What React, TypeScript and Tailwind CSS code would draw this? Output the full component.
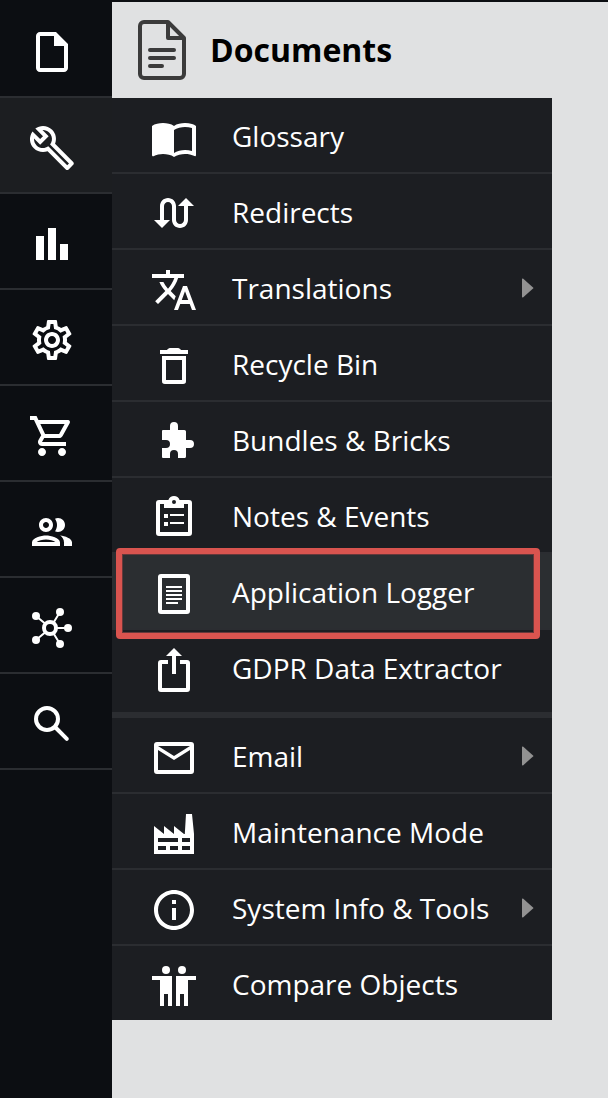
import type { ReactNode } from "react";

function Icon({ children }: { children: ReactNode }) {
  return (
    <svg viewBox="0 0 24 24" className="size-12 shrink-0 fill-white" fillRule="evenodd" aria-hidden="true">
      {children}
    </svg>
  );
}

const FileIcon = () => (
  <Icon>
    <path d="M14 2H6c-1.1 0-2 .9-2 2v16c0 1.1.9 2 2 2h12c1.1 0 2-.9 2-2V8zM6 20V4h7v5h5v11z" />
  </Icon>
);

const WrenchIcon = () => (
  <Icon>
    <path d="M22.61 18.99l-9.08-9.08c.93-2.34.45-5.1-1.44-7C9.79.61 6.21.4 3.66 2.26L7.5 6.11 6.08 7.52 2.25 3.69C.39 6.23.6 9.82 2.9 12.11c1.86 1.86 4.57 2.35 6.89 1.48l9.11 9.11c.39.39 1.02.39 1.41 0l2.3-2.3c.4-.38.4-1.01 0-1.41zm-3 1.6l-9.46-9.46c-.61.45-1.29.72-2 .82-1.36.2-2.79-.21-3.83-1.25C3.37 9.76 2.93 8.5 3 7.26l3.09 3.09 4.24-4.24-3.09-3.09c1.24-.07 2.49.37 3.44 1.31 1.08 1.08 1.49 2.57 1.24 3.96-.12.71-.42 1.37-.88 1.96l9.45 9.45-.88.89z" />
  </Icon>
);

const BarsIcon = () => (
  <Icon>
    <path d="M4 8h4v12H4zM10 4h4v16h-4zM16 12h4v8h-4z" />
  </Icon>
);

const GearIcon = () => (
  <Icon>
    <path d="M19.43 12.98c.04-.32.07-.64.07-.98 0-.34-.03-.66-.07-.98l2.11-1.65c.19-.15.24-.42.12-.64l-2-3.46c-.09-.16-.26-.25-.44-.25-.06 0-.12.01-.17.03l-2.49 1c-.52-.4-1.08-.73-1.69-.98l-.38-2.65C14.46 2.18 14.25 2 14 2h-4c-.25 0-.46.18-.49.42l-.38 2.65c-.61.25-1.17.59-1.69.98l-2.49-1c-.06-.02-.12-.03-.18-.03-.17 0-.34.09-.43.25l-2 3.46c-.13.22-.07.49.12.64l2.11 1.65c-.04.32-.07.65-.07.98 0 .33.03.66.07.98l-2.11 1.65c-.19.15-.24.42-.12.64l2 3.46c.09.16.26.25.44.25.06 0 .12-.01.17-.03l2.49-1c.52.4 1.08.73 1.69.98l.38 2.65c.03.24.24.42.49.42h4c.25 0 .46-.18.49-.42l.38-2.65c.61-.25 1.17-.59 1.69-.98l2.49 1c.06.02.12.03.18.03.17 0 .34-.09.43-.25l2-3.46c.12-.22.07-.49-.12-.64l-2.11-1.65zm-1.98-1.71c.04.31.05.52.05.73 0 .21-.02.43-.05.73l-.14 1.13.89.7 1.08.84-.7 1.21-1.27-.51-1.04-.42-.9.68c-.43.32-.84.56-1.25.73l-1.06.43-.16 1.13-.2 1.35h-1.4l-.19-1.35-.16-1.13-1.06-.43c-.43-.18-.83-.41-1.23-.71l-.91-.7-1.06.43-1.27.51-.7-1.21 1.08-.84.89-.7-.14-1.13c-.03-.31-.05-.54-.05-.74s.02-.43.05-.73l.14-1.13-.89-.7-1.08-.84.7-1.21 1.27.51 1.04.42.9-.68c.43-.32.84-.56 1.25-.73l1.06-.43.16-1.13.2-1.35h1.39l.19 1.35.16 1.13 1.06.43c.43.18.83.41 1.23.71l.91.7 1.06-.43 1.27-.51.7 1.21-1.07.85-.89.7.14 1.13zM12 8c-2.21 0-4 1.79-4 4s1.79 4 4 4 4-1.79 4-4-1.79-4-4-4zm0 6c-1.1 0-2-.9-2-2s.9-2 2-2 2 .9 2 2-.9 2-2 2z" />
  </Icon>
);

const CartIcon = () => (
  <Icon>
    <path d="M15.55 13c.75 0 1.41-.41 1.75-1.03l3.58-6.49c.37-.66-.11-1.48-.87-1.48H5.21l-.94-2H1v2h2l3.6 7.59-1.35 2.44C4.52 15.37 5.48 17 7 17h12v-2H7l1.1-2h7.45zM6.16 6h12.15l-2.76 5H8.53L6.16 6zM7 18c-1.1 0-1.99.9-1.99 2S5.9 22 7 22s2-.9 2-2-.9-2-2-2zm10 0c-1.1 0-1.99.9-1.99 2s.89 2 1.99 2 2-.9 2-2-.9-2-2-2z" />
  </Icon>
);

const PeopleIcon = () => (
  <Icon>
    <path d="M9 13.75c-2.34 0-7 1.17-7 3.5V19h14v-1.75c0-2.33-4.66-3.5-7-3.5zM4.34 17c.84-.58 2.87-1.25 4.66-1.25s3.82.67 4.66 1.25H4.34zM9 12c1.93 0 3.5-1.57 3.5-3.5S10.93 5 9 5 5.5 6.57 5.5 8.5 7.07 12 9 12zm0-5c.83 0 1.5.67 1.5 1.5S9.83 10 9 10s-1.5-.67-1.5-1.5S8.17 7 9 7zm7.04 6.81c1.16.84 1.96 1.96 1.96 3.44V19h4v-1.75c0-2.02-3.5-3.17-5.96-3.44zM15 12c1.93 0 3.5-1.57 3.5-3.5S16.93 5 15 5c-.54 0-1.04.13-1.5.35.63.89 1 1.98 1 3.15s-.37 2.26-1 3.15c.46.22.96.35 1.5.35z" />
  </Icon>
);

const HubIcon = () => (
  <Icon>
    <path d="M4 6l4.8 4M16 4l-3.2 5.2M14 12h6M12.8 14.8L16 20M4 18l4.8-4" fill="none" stroke="white" />
    <circle cx="11" cy="12" r="3" fill="none" stroke="white" strokeWidth="2" />
    <circle cx="4" cy="6" r="2" />
    <circle cx="16" cy="4" r="2" />
    <circle cx="20" cy="12" r="2" />
    <circle cx="16" cy="20" r="2" />
    <circle cx="4" cy="18" r="2" />
  </Icon>
);

const SearchIcon = () => (
  <Icon>
    <circle cx="9.5" cy="9.5" r="5.5" fill="none" stroke="white" strokeWidth="2" />
    <path d="M14 14l5.4 5.4" fill="none" stroke="white" strokeWidth="2" strokeLinecap="round" />
  </Icon>
);

const BookIcon = () => (
  <Icon>
    <path d="M21 5c-1.11-.35-2.33-.5-3.5-.5-1.95 0-4.05.4-5.5 1.5-1.45-1.1-3.55-1.5-5.5-1.5S2.45 4.9 1 6v14.65c0 .25.25.5.5.5.1 0 .15-.05.25-.05C3.1 20.45 5.05 20 6.5 20c1.95 0 4.05.4 5.5 1.5 1.35-.85 3.8-1.5 5.5-1.5 1.65 0 3.35.3 4.75 1.05.1.05.15.05.25.05.25 0 .5-.25.5-.5V6c-.6-.45-1.25-.75-2-1zm0 13.5c-1.1-.35-2.3-.5-3.5-.5-1.7 0-4.15.65-5.5 1.5V8c1.35-.85 3.8-1.5 5.5-1.5 1.2 0 2.4.15 3.5.5v11.5z" />
  </Icon>
);

const RedirectIcon = () => (
  <Icon>
    <path d="M18 4l-4 4h3v7c0 1.1-.9 2-2 2s-2-.9-2-2V8c0-2.21-1.79-4-4-4S5 5.79 5 8v7H2l4 4 4-4H7V8c0-1.1.9-2 2-2s2 .9 2 2v7c0 2.21 1.79 4 4 4s4-1.79 4-4V8h3l-4-4z" />
  </Icon>
);

const TranslateIcon = () => (
  <Icon>
    <path d="M12.87 15.07l-2.54-2.51.03-.03c1.74-1.94 2.98-4.17 3.71-6.53H17V4h-7V2H8v2H1v1.99h11.17C11.5 7.92 10.44 9.75 9 11.35 8.07 10.32 7.3 9.19 6.69 8h-2c.73 1.63 1.73 3.17 2.98 4.56l-5.09 5.02L4 19l5-5 3.11 3.11.76-2.04zM18.5 10h-2L12 22h2l1.12-3h4.75L21 22h2l-4.5-12zm-2.62 7l1.62-4.33L19.12 17h-3.24z" />
  </Icon>
);

const BinIcon = () => (
  <Icon>
    <path d="M6 19.5C6 20.6 6.4 21 7.5 21h9c1.1 0 1.5-.4 1.5-1.5V7H6zM8 9h8v10H8zM15.5 4c-.6-.7-1-1-2-1h-3c-1 0-1.4.3-2 1H5v2h14V4z" />
  </Icon>
);

const PuzzleIcon = () => (
  <Icon>
    <path d="M6 6.5a.5.5 0 0 1 .5-.5H10V4a2 2 0 0 1 4 0v2h3.200a.8.8 0 0 1 .8.8V11h2a2 2 0 0 1 0 4h-2v4.200a.8.8 0 0 1-.8.8H14v-2a2 2 0 0 0-4 0v2H6.500a.5.5 0 0 1-.5-.5V15h2a2 2 0 0 0 0-4H6z" />
  </Icon>
);

const ClipboardIcon = () => (
  <Icon>
    <path d="M19.5 3H14.8C14.4 1.8 13.3 1 12 1S9.6 1.8 9.2 3H4.5A1.5 1.5 0 0 0 3 4.5v15A1.5 1.5 0 0 0 4.5 21h15a1.5 1.5 0 0 0 1.5-1.5v-15A1.5 1.5 0 0 0 19.5 3zM12 3a1 1 0 1 1 0 2 1 1 0 0 1 0-2zM7 7h10V5h2v14H5V5h2z" />
    <path d="M7 10h2v2H7zM10 10h7v1h-7zM7 14h2v2H7zM10 14h7v1h-7z" />
  </Icon>
);

const LogIcon = () => (
  <Icon>
    <path d="M5.5 2h13A1.5 1.5 0 0 1 20 3.5v17a1.5 1.5 0 0 1-1.5 1.5h-13A1.5 1.5 0 0 1 4 20.5v-17A1.5 1.5 0 0 1 5.5 2zM6 4v16h12V4z" />
    <path d="M8 8h8v1H8zM8 10h8v1H8zM8 12h8v1H8zM8 14h8v1H8zM8 16h6v1H8z" />
  </Icon>
);

const ExportIcon = () => (
  <Icon>
    <path d="M12 1l4 4h-3v9h-2V5H8z" />
    <path d="M9 7H5.5A1.5 1.5 0 0 0 4 8.5v13A1.5 1.5 0 0 0 5.5 23h13a1.5 1.5 0 0 0 1.5-1.5v-13A1.5 1.5 0 0 0 18.5 7H15v2h3v12H6V9h3z" />
  </Icon>
);

const MailIcon = () => (
  <Icon>
    <path d="M3.5 4h17A1.5 1.5 0 0 1 22 5.5v13a1.5 1.5 0 0 1-1.5 1.5h-17A1.5 1.5 0 0 1 2 18.5v-13A1.5 1.5 0 0 1 3.5 4zM4 6l8 5 8-5zM4 8v10h16V8l-8 5z" />
  </Icon>
);

const FactoryIcon = () => (
  <Icon>
    <path d="M2 8l5 4V8l5 4V8l5 4h.4L18 2h3l1 10v10H2zM4 14v2h10v-2zM16 14v2h4v-2zM4 18v2h4v-2zM10 18v2h4v-2zM16 18v2h4v-2z" />
  </Icon>
);

const InfoIcon = () => (
  <Icon>
    <path d="M11 7h2v2h-2zm0 4h2v6h-2zm1-9C6.48 2 2 6.48 2 12s4.48 10 10 10 10-4.48 10-10S17.52 2 12 2zm0 18c-4.41 0-8-3.59-8-8s3.59-8 8-8 8 3.59 8 8-3.59 8-8 8z" />
  </Icon>
);

const CompareIcon = () => (
  <Icon>
    <circle cx="8" cy="4" r="2" />
    <circle cx="16" cy="4" r="2" />
    <path d="M1 7h10v15H9v-6H7v6H5V9H1zM13 7h10v2h-4v13h-2v-6h-2v6h-2z" />
  </Icon>
);

const railItems = [
  { label: "File", icon: <FileIcon /> },
  { label: "Tools", icon: <WrenchIcon />, active: true },
  { label: "Marketing", icon: <BarsIcon /> },
  { label: "Settings", icon: <GearIcon /> },
  { label: "Ecommerce", icon: <CartIcon /> },
  { label: "Customers", icon: <PeopleIcon /> },
  { label: "Data Hub", icon: <HubIcon /> },
  { label: "Search", icon: <SearchIcon /> },
];

type Entry = { label: string; icon: ReactNode; submenu?: boolean; highlighted?: boolean };

const primary: Entry[] = [
  { label: "Glossary", icon: <BookIcon /> },
  { label: "Redirects", icon: <RedirectIcon /> },
  { label: "Translations", icon: <TranslateIcon />, submenu: true },
  { label: "Recycle Bin", icon: <BinIcon /> },
  { label: "Bundles & Bricks", icon: <PuzzleIcon /> },
  { label: "Notes & Events", icon: <ClipboardIcon /> },
  { label: "Application Logger", icon: <LogIcon />, highlighted: true },
  { label: "GDPR Data Extractor", icon: <ExportIcon /> },
];

const secondary: Entry[] = [
  { label: "Email", icon: <MailIcon />, submenu: true },
  { label: "Maintenance Mode", icon: <FactoryIcon /> },
  { label: "System Info & Tools", icon: <InfoIcon />, submenu: true },
  { label: "Compare Objects", icon: <CompareIcon /> },
];

function MenuRow({ label, icon, submenu, highlighted }: Entry) {
  return (
    <li className="relative border-b-2 border-[#2b2d31] last:border-b-0">
      <button
        className={
          highlighted
            ? "flex h-[74px] w-full items-start bg-[#2b2e31] pt-4 pl-[38px] text-left"
            : "flex h-[74px] w-full items-start pt-4 pl-[38px] text-left"
        }
      >
        {icon}
        <span className="ml-[34px] flex-1 text-[28px] leading-[44px] whitespace-nowrap">{label}</span>
        {submenu && (
          <svg viewBox="0 0 12 20" className="mt-3 mr-[18px] h-5 w-3 fill-[#929292]" aria-hidden="true">
            <path d="M0 .8L1 .6 11.6 10 1 19.4 0 19.2z" />
          </svg>
        )}
      </button>
      {highlighted && (
        <div className="pointer-events-none absolute -top-1.5 left-1 z-10 h-[91px] w-[424px] rounded-[4px] border-6 border-[#d9544f] shadow-[inset_0_0_0_1px_#66383a]" />
      )}
    </li>
  );
}

export default function App() {
  return (
    <div className="flex h-[1098px] w-[608px] overflow-hidden bg-[#e0e1e2] font-['Open_Sans',sans-serif] text-white">
      <nav className="w-28 shrink-0 bg-[#0c0e12]">
        {railItems.map((item, i) => (
          <button
            key={item.label}
            aria-label={item.label}
            className={
              item.active
                ? "flex h-24 w-full items-start border-b-2 border-[#2b2d31] bg-[#1c1e21] pt-[26px] pl-7"
                : i === 0
                  ? "flex h-[98px] w-full items-start border-b-2 border-[#2b2d31] pt-7 pl-7"
                  : "flex h-24 w-full items-start border-b-2 border-[#2b2d31] pt-[26px] pl-7"
            }
          >
            {item.icon}
          </button>
        ))}
      </nav>
      <main className="flex-1 border-t-2 border-[#0c0e12]">
        <header className="flex h-24 items-center pl-[26px]">
          <svg viewBox="0 0 48 60" className="h-[60px] w-12 fill-none stroke-[#3b3b3b] stroke-4" aria-hidden="true">
            <path d="M30 2H6a4 4 0 0 0-4 4v48a4 4 0 0 0 4 4h36a4 4 0 0 0 4-4V18zM30 2v16h16" strokeLinejoin="round" />
            <path d="M12 30h24M12 38h24M12 46h12" strokeLinecap="round" />
          </svg>
          <h1 className="ml-6 text-[32px] leading-[44px] font-bold text-black">Documents</h1>
        </header>
        <div className="w-[440px] bg-[#1c1e22]">
          <ul>
            {primary.map((entry) => (
              <MenuRow key={entry.label} {...entry} />
            ))}
          </ul>
          <div className="mt-2 h-1.5 bg-[#2b2d31]" />
          <ul>
            {secondary.map((entry) => (
              <MenuRow key={entry.label} {...entry} />
            ))}
          </ul>
        </div>
      </main>
    </div>
  );
}
